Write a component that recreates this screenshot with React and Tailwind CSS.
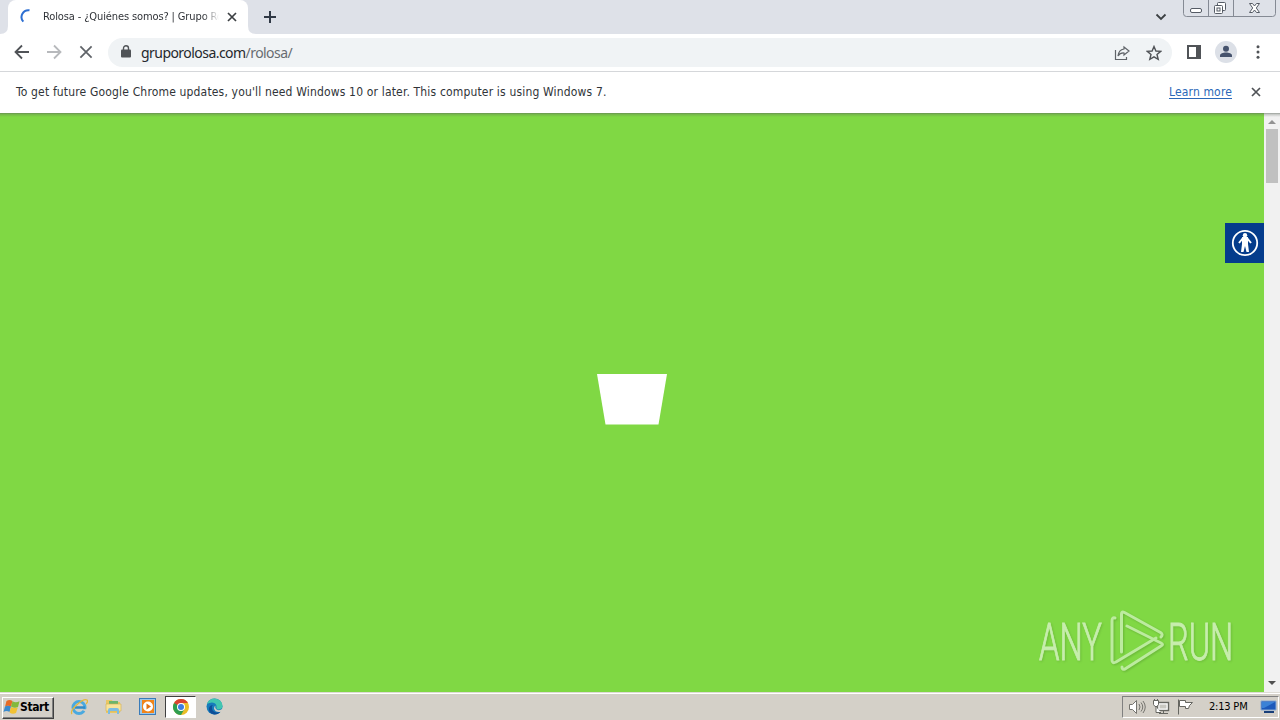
import React from "react";

const UI = "font-['DejaVu_Sans_Condensed','DejaVu_Sans',sans-serif]";

function Close({ size = 10, color = "#3c4043", w = 1.8 }) {
  return (
    <svg width={size} height={size} viewBox="0 0 10 10" fill="none" stroke={color} strokeWidth={w}>
      <path d="M1 1l8 8M9 1L1 9" />
    </svg>
  );
}

function WindowControls() {
  return (
    <svg className="ml-[14px] block shrink-0" width="94" height="18" viewBox="0 0 94 18" fill="none" stroke="#858a94">
      <path d="M.5 0v13.500q0 3 3 3h86q3 0 3-3V0M25.500 0v16M50.500 0v16" />
      <g stroke="#555b65">
        <rect x="7.500" y="8.500" width="11" height="4" rx="1.500" fill="#fff" />
        <rect x="34.500" y="2.500" width="8" height="8" rx="1" fill="#fff" />
        <rect x="31.500" y="5.500" width="8" height="8" rx="1" fill="#fff" />
        <rect x="34" y="8" width="3" height="3" />
        <path fill="#fff" d="M66.500 3.500h3l2 2.500 2-2.500h3L73.300 8l3.200 4.500h-3l-2-2.500-2 2.500h-3L69.700 8z" />
      </g>
    </svg>
  );
}

function TabStrip() {
  return (
    <div className="flex h-[34px] shrink-0 items-start bg-[#dee1e8]">
      <svg className="block shrink-0" width="8" height="34"><path d="M0 34q8 0 8-8v8z" fill="#fff" /></svg>
      <div className="flex h-[34px] w-[240px] shrink-0 items-center rounded-t-[8px] bg-white pl-[12px]">
        <svg className="block shrink-0" width="16" height="16" viewBox="0 0 16 16" fill="none" stroke="#2d6fd2" strokeWidth="2">
          <path d="M9.500 1.300A6.900 6.900 0 0 0 3.300 12.700" />
        </svg>
        <div className={`ml-[7px] w-[176px] overflow-hidden whitespace-nowrap text-[11px] leading-[16px] tracking-[-0.12px] text-[#303338] [mask-image:linear-gradient(to_right,black_160px,transparent_176px)] ${UI}`}>
          Rolosa - ¿Quiénes somos? | Grupo Rolosa
        </div>
        <div className="ml-[8px]"><Close size={10} w={1.7} /></div>
      </div>
      <svg className="block shrink-0" width="8" height="34"><path d="M8 34q-8 0-8-8v8z" fill="#fff" /></svg>
      <svg className="ml-[7px] mt-[10px] block shrink-0" width="14" height="14" fill="none" stroke="#303946" strokeWidth="2"><path d="M7 1v12M1 7h12" /></svg>
      <div className="flex-1" />
      <svg className="mr-[2px] mt-[12px] block" width="12" height="10" viewBox="0 0 12 10" fill="none" stroke="#3c4043" strokeWidth="1.800"><path d="M1.500 2.500L6 7l4.500-4.500" /></svg>
      <WindowControls />
      <div className="w-[3px] shrink-0" />
    </div>
  );
}

function Toolbar() {
  return (
    <div className="flex h-[38px] shrink-0 items-center border-b border-[#d5d7da] bg-white pl-[14px]">
      <svg className="-mt-[2px]" width="16" height="16" viewBox="0 0 16 16" fill="none" stroke="#505357" strokeWidth="1.800"><path d="M15 8H2M8 1.500L1.500 8 8 14.500" /></svg>
      <svg className="-mt-[2px] ml-[16px]" width="16" height="16" viewBox="0 0 16 16" fill="none" stroke="#b7b9bc" strokeWidth="1.800"><path d="M1 8h13M8 1.500L14.500 8 8 14.500" /></svg>
      <div className="-mt-[2px] ml-[17px]"><Close size={14} color="#5f6368" w={1.25} /></div>
      <div className="ml-[15px] flex h-[29px] w-[1064px] shrink-0 items-center rounded-full bg-[#f0f3f5] pl-[13px]">
        <svg className="-mt-[2px]" width="10" height="13" viewBox="0 0 10 13"><rect y="4.500" width="10" height="8" rx="1" fill="#505357" /><path d="M2.500 5V3.200a2.500 2.500 0 0 1 5 0V5" fill="none" stroke="#505357" strokeWidth="1.400" /></svg>
        <div className="ml-[10px] whitespace-nowrap font-['Noto_Sans','Open_Sans',sans-serif] text-[14px] leading-[20px] tracking-[-0.55px] text-[#25282c]">
          gruporolosa.com<span className="text-[#686c71]">/rolosa/</span>
        </div>
        <div className="flex-1" />
        <svg width="16" height="16" viewBox="0 0 16 16" fill="none" stroke="#5f6368" strokeWidth="1.200"><path d="M1.500 5v9.500h11V12M10 2l5 4-5 4V8C7.500 7.800 5.500 8.700 4 11c.4-4 2.600-6.500 6-7z" /></svg>
        <svg className="ml-[16px] mr-[10px]" width="16" height="16" viewBox="0 0 16 16" fill="none" stroke="#505357" strokeWidth="1.400"><path d="M8 1.500l1.900 4.500 4.800.4-3.700 3.100 1.200 4.800L8 11.800l-4.200 2.500L5 9.500 1.300 6.400l4.800-.4z" /></svg>
      </div>
      <svg className="-mt-[2px] ml-[15px] shrink-0" width="14" height="14" viewBox="0 0 14 14"><path fill="#505357" fillRule="evenodd" d="M0 0h14v14H0zM2 2v10h7V2z" /></svg>
      <svg className="-mt-[2px] ml-[14px] shrink-0" width="22" height="22" viewBox="0 0 22 22"><circle cx="11" cy="11" r="11" fill="#dce0e7" /><circle cx="11" cy="7.800" r="3" fill="#46536d" /><path d="M5 16v-1.500c0-4 12-4 12 0V16z" fill="#46536d" /></svg>
      <svg className="-mt-[2px] ml-[19px] shrink-0" width="4" height="16" viewBox="0 0 4 16" fill="#505357"><circle cx="2" cy="2.800" r="1.500" /><circle cx="2" cy="8" r="1.500" /><circle cx="2" cy="13.200" r="1.500" /></svg>
    </div>
  );
}

function Watermark() {
  return (
    <svg className="absolute left-[1030px] top-[490px]" width="212" height="78" viewBox="1030 603 212 78">
      <g fill="#fff" stroke="#fff" strokeWidth="1" opacity=".56" className="font-['Roboto',sans-serif] [font-weight:300] [filter:drop-shadow(1px_1px_1px_rgba(50,100,30,.4))]">
        <text transform="translate(1039 659.500) scale(.61 1)" fontSize="52" textLength="103" lengthAdjust="spacingAndGlyphs">ANY</text>
        <text transform="translate(1168 659.500) scale(.61 1)" fontSize="52" textLength="107" lengthAdjust="spacingAndGlyphs">RUN</text>
      </g>
      <g fill="none" stroke="#c7efaf" strokeWidth="3" strokeLinecap="round" strokeLinejoin="round" opacity=".85" className="[filter:drop-shadow(1px_1px_1px_rgba(50,100,30,.35))]">
        <path d="M1121.500 652v-38q0-3 3-1.500l36 20q3 2 .5 4.500" />
        <path d="M1127 626l34 17q3 1.500 0 3l-36 23q-3 1-3-2" />
        <path d="M1115 618q-3-1-3 3v39q0 4 4 2l40-24" />
      </g>
    </svg>
  );
}

function Page() {
  return (
    <div className="relative flex h-[579px] shrink-0 bg-[#80d844]">
      <div className="flex flex-1 items-center justify-center pb-[7px]">
        <svg width="70" height="51" viewBox="0 0 70 51"><path d="M0 0h70l-8.500 50.500h-53z" fill="#fff" /></svg>
      </div>
      <div className="flex w-[16px] flex-col items-center bg-[#f1f1f1]">
        <svg width="16" height="16"><path d="M4 11l4-4 4 4z" fill="#929292" /></svg>
        <div className="h-[54px] w-[12px] bg-[#c0c0c0]" />
        <div className="flex-1" />
        <svg width="16" height="16"><path d="M4 5l4 4 4-4z" fill="#505050" /></svg>
      </div>
      <div className="absolute left-0 top-0 h-[4px] w-full bg-[linear-gradient(rgba(90,100,90,.6),rgba(90,100,90,.28)_35%,transparent)]" />
      <div className="absolute right-[16px] top-[110px] flex h-[40px] w-[39px] items-center justify-center bg-[#043c8c]">
        <svg width="28" height="28" viewBox="0 0 28 28"><circle cx="14" cy="14" r="12.200" fill="none" stroke="#fff" strokeWidth="1.800" /><circle cx="14" cy="6.200" r="2.200" fill="#fff" /><path d="M8 14l4-5h4l4 5" fill="none" stroke="#fff" strokeWidth="2" strokeLinejoin="round" /><path d="M11 8h6v7l1 8h-2.500L14 17l-1.500 6H10l1-8z" fill="#fff" /></svg>
      </div>
      <Watermark />
    </div>
  );
}

function StartFlag() {
  return (
    <svg className="-mt-[2px] shrink-0" width="17" height="16" viewBox="0 0 17 16">
      <path d="M3.500 2q3-2 6 0L8 7.800q-3-2-6 0z" fill="#e66b27" />
      <path d="M9.500 2.300q3 1.800 7 0L15 8q-3.500 1.800-7-.5z" fill="#83b93b" />
      <path d="M2 7.500q3-1.500 6 0L6.500 13q-3-2-6 0z" fill="#3a8ace" />
      <path d="M8 8q3 1.800 6.800.5L13 14q-3.500 1.700-6.500-.5z" fill="#f2c234" />
    </svg>
  );
}

function Taskbar() {
  return (
    <div className="flex h-[28px] shrink-0 items-center border-t border-[#dedbd4] bg-[#d4d0c8] pl-[2px] shadow-[inset_0_1px_0_#fff]">
      <div className={`mt-[2px] flex h-[22px] w-[52px] shrink-0 items-center border border-b-[#404040] border-l-white border-r-[#404040] border-t-white text-[12px] font-bold tracking-[-0.4px] text-black shadow-[inset_-1px_-1px_#808080] ${UI}`}>
        <StartFlag /><span className="-mt-[2px]">Start</span>
      </div>
      <svg className="ml-[16px] shrink-0" width="18" height="18" viewBox="0 0 18 18" fill="none"><circle cx="9" cy="9.500" r="6" stroke="#4aa9df" strokeWidth="3" /><path d="M5 9.500h10" stroke="#318bc9" strokeWidth="2.500" /><path d="M11 11.200h6v3z" fill="#d4d0c8" /><path d="M2 16C-1 12 13 0 17 2c1 1 0 3-1 4" stroke="#e5b73b" strokeWidth="1.300" /></svg>
      <svg className="ml-[17px] shrink-0" width="17" height="18" viewBox="0 0 17 18"><path d="M1 4V2h6l1 2h7v11H1z" fill="#e9c765" /><path d="M4 3h9v4H4z" fill="#6bb56b" /><path d="M1 6h15v7H1z" fill="#f8e39a" stroke="#d5ae4f" strokeWidth=".6" /><path d="M3 16v-4q0-2 2-2h7q2 0 2 2v4h-2v-3H5v3z" fill="#7dbce2" /></svg>
      <svg className="ml-[17px] shrink-0" width="17" height="17" viewBox="0 0 17 17"><rect x=".5" y=".5" width="16" height="16" fill="#9cc7e9" stroke="#397bb9" /><rect x="3" y="2" width="12" height="13" fill="#f18419" /><circle cx="9" cy="8.500" r="5" fill="#fff" /><path d="M7.500 5.500v6l4.500-3z" fill="#e37010" /></svg>
      <div className="ml-[9px] mt-px flex h-[22px] w-[31px] shrink-0 items-center justify-center border border-b-white border-l-[#404040] border-r-white border-t-[#404040] bg-white">
        <svg width="16" height="16" viewBox="0 0 16 16"><circle cx="8" cy="8" r="8" fill="#ebbd27" /><path d="M1.070 4A8 8 0 0 1 14.930 4H8L4.540 10z" fill="#da4331" /><path d="M1.070 4A8 8 0 0 0 8 16l3.460-6L8 8z" fill="#2f9e50" /><circle cx="8" cy="8" r="4" fill="#fff" /><circle cx="8" cy="8" r="3" fill="#3d7de2" /></svg>
      </div>
      <svg className="ml-[10px] shrink-0" width="17" height="17" viewBox="0 0 17 17"><circle cx="8.500" cy="8.500" r="8" fill="#167bbb" /><path d="M1 6Q3 .5 8.500.5q7.500.5 8 7.500 0 3-3.500 3.500-3 0-2.500-2Q11 5 6 4.500 3 4.500 1 6z" fill="#42c6b0" /><path d="M6 8q-1 5 4 6.500 3 .5 5-1.500-3 4-7 3.500Q2 15 3 10q1-3 4-3z" fill="#0d4e98" /><path d="M9.500 7.500q-1 3 2 4.500 3 .5 4.500-1 1 3-2 3-5 .5-6-3.500 0-2 1.500-3z" fill="#d4d0c8" /></svg>
      <div className="flex-1" />
      <div className="mr-px mt-px flex h-[22px] w-[157px] shrink-0 items-center border border-b-white border-l-[#808080] border-r-white border-t-[#808080] pl-[6px]">
        <svg className="shrink-0" width="17" height="16" viewBox="0 0 17 16" fill="none" stroke="#75746f"><path fill="#fff" d="M.5 5.500h3l4-4v13l-4-4h-3z" /><path d="M10 5q2 3 0 6M12 3.500q3.500 4.500 0 9M14 2q4.500 6 0 12" /></svg>
        <svg className="ml-[7px] shrink-0" width="17" height="16" viewBox="0 0 17 16" fill="none" stroke="#666661"><rect x="4.500" y="3.500" width="11" height="8" fill="#fff" strokeWidth="1.400" /><rect x="6.500" y="5.500" width="7" height="4" fill="#c8c7c1" stroke="none" /><path fill="#fff" d="M.5 1.500h5v4l-1.500 2H2l-1.500-2zM1.500 0v2M4.500 0v2M3 8v5.500h5M10.500 12v2M6 14.500h9" /></svg>
        <svg className="ml-[7px] shrink-0" width="17" height="16" viewBox="0 0 17 16" fill="#fff" stroke="#666661"><path d="M1.500.5v15M2.500 1.500h6v2h7l-3 3-1 3h-3v-2h-6z" /></svg>
        <div className={`ml-[15px] w-[51px] whitespace-nowrap text-[11px] leading-[14px] tracking-[-0.2px] text-black ${UI}`}>2:13 PM</div>
        <svg className="shrink-0" width="17" height="16" viewBox="0 0 17 16"><path d="M1 2h15v9H1z" fill="#1c59ba" stroke="#88aad3" /><path d="M2 3h13L4 9H2z" fill="#3b82d6" /><path d="M4 12h10v2H4z" fill="#183f79" /></svg>
      </div>
    </div>
  );
}

export default function App() {
  return (
    <div className="flex h-[720px] w-[1280px] flex-col overflow-hidden bg-white">
      <TabStrip />
      <Toolbar />
      <div className={`flex h-[41px] shrink-0 items-center whitespace-nowrap bg-white pb-[2px] pl-[16px] pr-[19px] text-[12px] leading-[16px] text-[#303438] ${UI}`}>
        <span className="tracking-[0.165px]">To get future Google Chrome updates, you'll need Windows 10 or later. This computer is using Windows 7.</span>
        <div className="flex-1" />
        <span className="mr-[19px] tracking-[0.15px] text-[#2a68b8] underline underline-offset-2">Learn more</span>
        <Close size={10} color="#505357" w={1.7} />
      </div>
      <Page />
      <Taskbar />
    </div>
  );
}
